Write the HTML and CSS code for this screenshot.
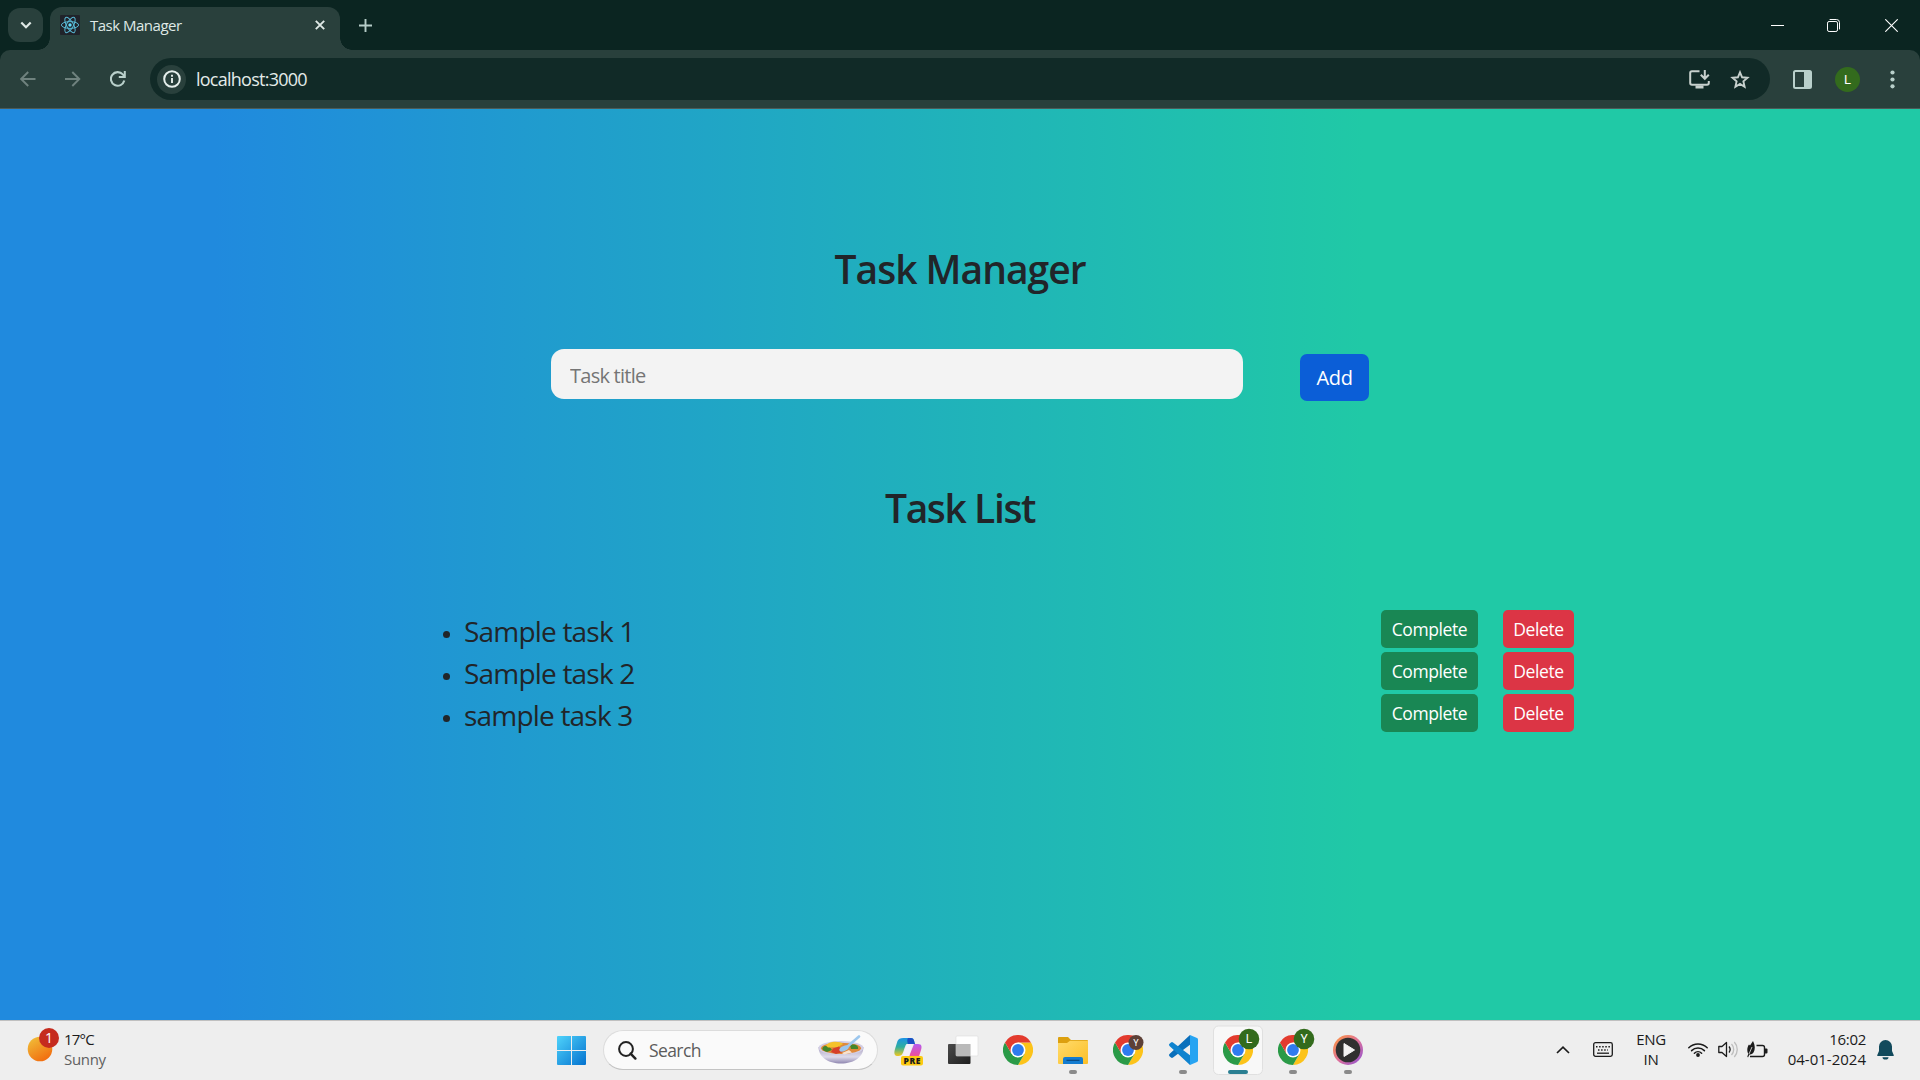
FILE: index.html
```html
<!DOCTYPE html>
<html lang="en">
<head>
<meta charset="utf-8">
<title>Task Manager</title>
<link rel="stylesheet" href="styles.css">
</head>
<body>
<svg class="defs" width="0" height="0">
  <defs>
    <linearGradient id="winBlue" x1="0" y1="0" x2="1" y2="1"><stop offset="0" stop-color="#4fd3fb"/><stop offset="1" stop-color="#0472cf"/></linearGradient>
    <linearGradient id="sun" x1="0.2" y1="0" x2="0.8" y2="1"><stop offset="0" stop-color="#f0bd38"/><stop offset="1" stop-color="#f2670c"/></linearGradient>
    <linearGradient id="bowlBody" x1="0" y1="0" x2="0" y2="1"><stop offset="0" stop-color="#a9a2c2"/><stop offset=".6" stop-color="#dedbea"/><stop offset="1" stop-color="#8f86b0"/></linearGradient>
    <linearGradient id="copA" x1="0" y1="0" x2="0" y2="1"><stop offset="0" stop-color="#1b93e6"/><stop offset=".5" stop-color="#2fae9e"/><stop offset="1" stop-color="#f2c81e"/></linearGradient>
    <linearGradient id="copB" x1="0" y1="0" x2="0" y2="1"><stop offset="0" stop-color="#b65cf0"/><stop offset=".6" stop-color="#ea4fa0"/><stop offset="1" stop-color="#f79a4c"/></linearGradient>
    <linearGradient id="folder" x1="0" y1="0" x2="1" y2="1"><stop offset="0" stop-color="#ffdb6b"/><stop offset="1" stop-color="#fcbf27"/></linearGradient>
    <linearGradient id="mediaRing" x1="0" y1="0" x2="1" y2="1"><stop offset="0" stop-color="#ff9736"/><stop offset=".5" stop-color="#e0729a"/><stop offset="1" stop-color="#8a4fd6"/></linearGradient>
    <linearGradient id="darkSq" x1="0" y1="0" x2="1" y2="1"><stop offset="0" stop-color="#4a4a4a"/><stop offset="1" stop-color="#1e1e1e"/></linearGradient>
    <symbol id="chrome" viewBox="-15 -15 30 30">
      <path d="M0 -7.5H13A15 15 0 0 1 0 15L6.5 3.75Z" fill="#fcc31a"/>
      <path d="M-13 -7.5A15 15 0 0 0 0 15L6.5 3.75 -6.5 3.75Z" fill="#2a9a47"/>
      <path d="M-13 -7.5A15 15 0 0 1 13 -7.5H0L-6.5 3.75Z" fill="#e33b2e"/>
      <circle r="7.5" fill="#fff"/><circle r="5.9" fill="#2f7bee"/>
    </symbol>
  </defs>
</svg>
<div class="screen">
  <header class="browser">
    <div class="tabstrip">
      <button class="tab-menu"><svg width="12" height="8" viewBox="0 0 12 8"><path d="M1.3 1.5 6 6.2 10.7 1.5" fill="none" stroke="#dfe9e6" stroke-width="2.2"/></svg></button>
      <div class="tab">
        <svg class="favicon" width="20" height="20" viewBox="-10 -10 20 20"><rect x="-10" y="-10" width="20" height="20" rx="1" fill="#20232a"/><g fill="none" stroke="#58b8d4" stroke-width="1"><ellipse rx="8.6" ry="3.4"/><ellipse rx="8.6" ry="3.4" transform="rotate(60)"/><ellipse rx="8.6" ry="3.4" transform="rotate(120)"/></g><circle r="1.7" fill="#61dafb"/></svg>
        <span class="tab-title">Task Manager</span>
        <svg class="tab-close" width="10" height="10" viewBox="0 0 10 10"><path d="M.8.8 9.2 9.2M9.2.8.8 9.2" stroke="#dfe9e6" stroke-width="1.9"/></svg>
      </div>
      <svg class="new-tab" width="13" height="13" viewBox="0 0 13 13"><path d="M6.5 0V13M0 6.5H13" stroke="#b5ccc7" stroke-width="1.9"/></svg>
      <div class="window-controls">
        <svg width="13" height="13" viewBox="0 0 13 13"><path d="M0 6.5H13" stroke="#fff"/></svg>
        <svg width="13" height="13" viewBox="0 0 13 13"><g fill="none" stroke="#fff"><rect x=".5" y="2.5" width="10" height="10" rx="1.6"/><path d="M2.6.5H9.5A3 3 0 0 1 12.5 3.5V10.4"/></g></svg>
        <svg width="13" height="13" viewBox="0 0 13 13"><path d="M.3.3 12.7 12.7M12.7.3.3 12.7" stroke="#fff" stroke-width="1.1"/></svg>
      </div>
    </div>
    <div class="toolbar">
      <div class="nav">
        <svg width="16" height="16" viewBox="0 0 16 16"><path d="M15.5 8H1.8M8.2 1 1.2 8l7 7" fill="none" stroke="#6f827e" stroke-width="1.9"/></svg>
        <svg width="16" height="16" viewBox="0 0 16 16"><path d="M0 8H13.7M7.3 1l7 7-7 7" fill="none" stroke="#6f827e" stroke-width="1.9"/></svg>
        <svg width="16" height="16" viewBox="0 0 16 16"><path d="M14.3 9.6A6.8 6.8 0 1 1 12.8 3.4L14.5 5.4" fill="none" stroke="#b9d0cb" stroke-width="2.1"/><path d="M15.8 0V7H8.8V5H13.8V0Z" fill="#b9d0cb"/></svg>
      </div>
      <div class="omnibox">
        <span class="site-info"><svg width="18" height="18" viewBox="0 0 18 18"><circle cx="9" cy="9" r="7.8" fill="none" stroke="#e6efec" stroke-width="2"/><path d="M9 8V13M9 4.8V6.7" stroke="#e6efec" stroke-width="1.9"/></svg></span>
        <span class="url">localhost:3000</span>
        <svg class="install" width="21" height="19" viewBox="0 0 21 19"><path d="M10.5 1.2H3A1.8 1.8 0 0 0 1.2 3V13A1.8 1.8 0 0 0 3 14.8H18A1.8 1.8 0 0 0 19.8 13V11" fill="none" stroke="#c7d0cd" stroke-width="2"/><path d="M6.5 15.5H14.5V18.5H6.5Z" fill="#c7d0cd"/><path d="M15.8 0V8M11.8 4.8 15.8 8.8 19.8 4.8" fill="none" stroke="#c7d0cd" stroke-width="2"/></svg>
        <svg width="20" height="19" viewBox="0 0 20 19"><path d="M10 2.3 12.1 7.3 17.5 7.8 13.4 11.4 14.6 16.7 10 13.9 5.4 16.7 6.6 11.4 2.5 7.8 7.9 7.3Z" fill="none" stroke="#c7d0cd" stroke-width="1.9"/></svg>
      </div>
      <svg class="panel" width="19" height="19" viewBox="0 0 19 19"><rect x="1" y="1" width="17" height="17" rx="1.5" fill="none" stroke="#b9d0cb" stroke-width="2"/><path d="M11 1H18V18H11Z" fill="#b9d0cb"/></svg>
      <span class="avatar">L</span>
      <svg class="kebab" width="5" height="19" viewBox="0 0 5 19"><g fill="#b9d0cb"><circle cx="2.5" cy="2.5" r="2.1"/><circle cx="2.5" cy="9.5" r="2.1"/><circle cx="2.5" cy="16.3" r="2.1"/></g></svg>
    </div>
  </header>

  <main class="page">
    <h1 class="heading">Task Manager</h1>
    <form class="task-form">
      <input class="task-input" type="text" placeholder="Task title">
      <button class="btn btn-add" type="button">Add</button>
    </form>
    <h2 class="heading heading-list">Task List</h2>
    <ul class="tasks">
      <li class="task"><span class="task-name">Sample task 1</span><button class="btn btn-sm complete">Complete</button><button class="btn btn-sm delete">Delete</button></li>
      <li class="task"><span class="task-name">Sample task 2</span><button class="btn btn-sm complete">Complete</button><button class="btn btn-sm delete">Delete</button></li>
      <li class="task"><span class="task-name">sample task 3</span><button class="btn btn-sm complete">Complete</button><button class="btn btn-sm delete">Delete</button></li>
    </ul>
  </main>

  <footer class="taskbar">
    <div class="weather">
      <svg width="34" height="36" viewBox="0 0 34 36"><circle cx="13" cy="22" r="12.3" fill="url(#sun)"/><circle cx="22" cy="11" r="10" fill="#c52b1e"/><text x="22" y="15.6" class="badge-num">1</text></svg>
      <div class="two-line"><span class="temp">17°C</span><span class="muted">Sunny</span></div>
    </div>
    <div class="apps">
      <svg class="start" width="29" height="29" viewBox="0 0 29 29"><path d="M1 0H14V14H0V1A1 1 0 0 1 1 0ZM15 0H28A1 1 0 0 1 29 1V14H15ZM0 15H14V29H1A1 1 0 0 1 0 28ZM15 15H29V28A1 1 0 0 1 28 29H15Z" fill="url(#winBlue)"/></svg>
      <div class="search">
        <svg width="19" height="19" viewBox="0 0 19 19"><circle cx="8" cy="8" r="6.9" fill="none" stroke="#222" stroke-width="2"/><path d="M12.6 12.6 17.4 17.6" stroke="#222" stroke-width="2.4" stroke-linecap="round"/></svg>
        <span class="search-label">Search</span>
        <svg class="bowl" width="46" height="30" viewBox="0 0 46 30">
          <path d="M.5 12C.5 22 10 28.500 23 28.500S45.500 22 45.500 12Z" fill="url(#bowlBody)"/>
          <ellipse cx="23" cy="13" rx="22.500" ry="7" fill="#d3cee4"/>
          <ellipse cx="23" cy="13.300" rx="20" ry="5.600" fill="#e08a3a"/>
          <path d="M4.500 13C6 9.500 12 11 14 15L9 17C5 16 4 14 4.500 13ZM32 10C37 8.500 41 11 40 14L33 14Z" fill="#44862b"/>
          <path d="M8 10.500C10 6 22 5.500 25 9L20 12 10 12.500Z" fill="#f5c22b"/>
          <path d="M15 13.500 21 11.500 25 17 18 19 13 17Z" fill="#d63f2a"/>
          <path d="M24 18 31 15 34 17.500 26 19.500Z" fill="#f8e3cf"/>
          <ellipse cx="26" cy="13.500" rx="5" ry="2.500" transform="rotate(-25 26 13.500)" fill="#9cc7ee"/>
          <path d="M29 12 41 1.500" stroke="#9cc7ee" stroke-width="2.600" stroke-linecap="round"/>
        </svg>
      </div>
      <div class="icons">
        <svg class="app" viewBox="-27 -29 54 59"><path d="M-4.500-12H3C6-12 6-9 7-6H-1C-3-6-4 2-6 4.500-7 6-9 6-11 6-14 6-14 2-13-1L-10.500-9C-9.500-11-8-12-4.500-12Z" fill="url(#copA)"/><path d="M0-12H3C6-12 6-9 7-6H0C-1-8-1-11 0-12Z" fill="#1a4fc4"/><path d="M6-6H10C14-6 14-3 13 0L10.500 8C9.500 11 8 12 5 12H-2C0 11 1 8 2 4Z" fill="url(#copB)"/><path d="M-1-6H4.500L1 6H-5Z" fill="#f4f0fa"/><rect x="-7" y="6" width="22" height="9.500" rx="2" fill="#fdca12"/><text x="4.200" y="13.600" class="pre">PRE</text></svg>
        <svg class="app" viewBox="-27 -29 54 59"><rect x="-15" y="-6" width="22.500" height="20" rx="1" fill="url(#darkSq)"/><rect x="-7" y="-14" width="22" height="20" rx="1" fill="#fff" fill-opacity=".9" stroke="#dcdcdc" stroke-width=".6"/><rect x="-7" y="-6" width="14.500" height="12" fill="#b9b9b9"/></svg>
        <svg class="app" viewBox="-27 -29 54 59"><use href="#chrome" x="-15" y="-15" width="30" height="30"/></svg>
        <svg class="app" viewBox="-27 -29 54 59"><path d="M-15-12A1 1 0 0 1-14-13H-5L-2-10H14A1 1 0 0 1 15-9V0H-15Z" fill="#dca00f"/><path d="M-15-7H-6L-3-9.300H15V13A1 1 0 0 1 14 14H-14A1 1 0 0 1-15 13Z" fill="url(#folder)"/><path d="M-10 14V9A2 2 0 0 1-8 7H8A2 2 0 0 1 10 9V14Z" fill="#147cd0"/><rect x="-6.500" y="9.700" width="13" height="1.300" fill="#0a4c86"/><rect x="-4" y="20" width="8" height="4" rx="2" fill="#8a8a8a"/></svg>
        <svg class="app" viewBox="-27 -29 54 59"><use href="#chrome" x="-15" y="-15" width="30" height="30"/><circle cx="8" cy="-7.500" r="7.500" fill="#5d4037"/><text x="8" y="-4" class="badge-sm">Y</text></svg>
        <svg class="app" viewBox="-27 -29 54 59"><path d="M7-15-13.500 4A1.500 1.500 0 0 0-13.500 6.200L-12 7.600A1.500 1.500 0 0 0-10 7.600L8-6Z" fill="#0a6fbb"/><path d="M7 15-13.500-4A1.500 1.500 0 0 1-13.500-6.200L-12-7.600A1.500 1.500 0 0 1-10-7.600L8 6Z" fill="#0f83cf"/><path d="M7-15 14-12A2 2 0 0 1 15-10.500V10.500A2 2 0 0 1 14 12L7 15Z" fill="#27a4f2"/><rect x="-4" y="20" width="8" height="4" rx="2" fill="#8a8a8a"/></svg>
        <svg class="app" viewBox="-27 -29 54 59"><rect x="-24.500" y="-24" width="49" height="48.500" rx="5" fill="#f8f8f8" stroke="#e0e0e0"/><use href="#chrome" x="-15" y="-15" width="30" height="30"/><circle cx="11" cy="-11" r="10.300" fill="#336b1d"/><text x="11" y="-7" class="badge-lg">L</text><rect x="-10" y="20" width="20" height="4" rx="2" fill="#2b7f92"/></svg>
        <svg class="app" viewBox="-27 -29 54 59"><use href="#chrome" x="-15" y="-15" width="30" height="30"/><circle cx="11" cy="-11" r="10.300" fill="#336b1d"/><text x="11" y="-7" class="badge-lg">Y</text><rect x="-4" y="20" width="8" height="4" rx="2" fill="#8a8a8a"/></svg>
        <svg class="app" viewBox="-27 -29 54 59"><circle r="15" fill="url(#mediaRing)"/><circle r="12.300" fill="#303030"/><path d="M-4-6.500V6.500L6.500 0Z" fill="#f4f4f4" stroke="#f4f4f4" stroke-linejoin="round"/><rect x="-4" y="20" width="8" height="4" rx="2" fill="#8a8a8a"/></svg>
      </div>
    </div>
    <div class="tray">
      <svg width="14" height="8" viewBox="0 0 14 8"><path d="M1 7 7 1.200 13 7" fill="none" stroke="#1b1b1b" stroke-width="1.700"/></svg>
      <svg class="keyboard" width="20" height="15" viewBox="0 0 20 15"><rect x=".7" y=".7" width="18.600" height="13.600" rx="1.800" fill="none" stroke="#1b1b1b" stroke-width="1.300"/><path d="M3 4.700H17M5 7.900H15" stroke="#1b1b1b" stroke-width="1.500" stroke-dasharray="1.500 1.600"/><path d="M4 11.200H16" stroke="#1b1b1b" stroke-width="1.300"/></svg>
      <div class="two-line lang"><span>ENG</span><span>IN</span></div>
      <svg class="wifi" width="20" height="15" viewBox="0 0 20 15"><g fill="none" stroke="#1b1b1b" stroke-width="1.500" stroke-linecap="round"><path d="M.8 5.800A13 13 0 0 1 19.200 5.800M3.600 8.600A9 9 0 0 1 16.400 8.600M6.400 11.200A5.200 5.200 0 0 1 13.600 11.200"/></g><circle cx="10" cy="13" r="1.900" fill="#1b1b1b"/></svg>
      <svg class="volume" width="21" height="17" viewBox="0 0 21 17"><path d="M.8 5.500H4L8.500 1.500V15.500L4 11.500H.8Z" fill="none" stroke="#1b1b1b" stroke-width="1.300" stroke-linejoin="round"/><path d="M11 5.500A5 5 0 0 1 11 11.500" fill="none" stroke="#1b1b1b" stroke-width="1.300"/><path d="M13.500 3A8 8 0 0 1 13.500 14M16.300 1A11 11 0 0 1 16.300 16" fill="none" stroke="#bdbdbd" stroke-width="1.300"/></svg>
      <svg class="battery" width="21" height="18" viewBox="0 0 21 18"><path d="M9.500 4.500H15.500A2 2 0 0 1 17.500 6.500V13.500A2 2 0 0 1 15.500 15.500H3" fill="none" stroke="#1b1b1b" stroke-width="1.400"/><path d="M18 7.500H19.500A1 1 0 0 1 20.500 8.500V11.500A1 1 0 0 1 19.500 12.500H18Z" fill="#1b1b1b"/><path d="M6 0C8 4 8.500 8 6.500 11.500 5 13.500 3 13.500 2.500 13.500L1 16.500.3 15.500 1.300 13C-.5 10 .3 5.500 2 3.500L3 4.500C4 3 5 1.500 6 0Z" fill="#1b1b1b"/><path d="M2 13 5 6" stroke="#eee" stroke-width=".8"/></svg>
      <div class="two-line clock"><span class="time">16:02</span><span>04-01-2024</span></div>
      <svg class="bell" width="17" height="20" viewBox="0 0 17 20"><path d="M8.500 0A6.500 6.500 0 0 1 15 6.500V11L16.700 15V16H.3V15L2 11V6.500A6.500 6.500 0 0 1 8.500 0Z" fill="#124a5c"/><path d="M5.500 17.200H11.500A3 2.300 0 0 1 5.500 17.200Z" fill="#124a5c"/></svg>
    </div>
  </footer>
</div>
</body>
</html>
```
FILE: styles.css
```css
* { box-sizing: border-box; }
body { margin: 0; font-family: "Open Sans", "Noto Sans", sans-serif; color: #212529; }
button { font: inherit; border: 0; padding: 0; }
svg { display: block; flex: none; }
.defs { position: absolute; }
.screen { width: 1920px; height: 1080px; overflow: hidden; display: flex; flex-direction: column; }

/* Browser chrome */
.browser { height: 109px; background: #0b2521; border-bottom: 1px solid #4b5b58; }
.tabstrip { height: 50px; display: flex; align-items: center; padding: 0 22px 0 8px; }
.tab-menu { width: 35px; height: 34px; border-radius: 12px; background: #29403c; display: grid; place-items: center; }
.tab { position: relative; align-self: flex-end; width: 290px; height: 43px; margin-left: 7px; padding: 0 15px 7px 10px; background: #29403c; border-radius: 12px 12px 0 0; display: flex; align-items: center; }
.tab::before, .tab::after { content: ""; position: absolute; bottom: 0; width: 12px; height: 12px; }
.tab::before { left: -12px; background: radial-gradient(circle at 0 0, transparent 11.5px, #29403c 12px); }
.tab::after { right: -12px; background: radial-gradient(circle at 100% 0, transparent 11.5px, #29403c 12px); }
.tab-title { margin-left: 10px; font-size: 15px; letter-spacing: -.5px; color: #dfe9e6; }
.tab-close { margin-left: auto; }
.new-tab { margin-left: 19px; }
.window-controls { margin-left: auto; display: flex; gap: 44px; }
.window-controls svg:nth-child(2) { margin: 0 1px 0 -1px; }
.toolbar { height: 58px; background: #29403c; border-radius: 10px 10px 0 0; display: flex; align-items: center; padding: 0 25px 0 20px; }
.nav { display: flex; gap: 29px; width: 130px; }
.omnibox { width: 1620px; height: 42px; border-radius: 21px; background: #112a27; display: flex; align-items: center; padding: 0 20px 0 7px; }
.site-info { width: 29px; height: 29px; border-radius: 50%; background: #29403c; display: grid; place-items: center; }
.url { margin-left: 10px; font-size: 18px; letter-spacing: -.75px; color: #e3ebe9; }
.install { margin-left: auto; margin-right: 20px; }
.panel { margin-left: 23px; }
.avatar { width: 25px; height: 25px; margin-left: 23px; border-radius: 50%; background: #336b1d; color: #fff; font: 13px/25px Roboto, sans-serif; text-align: center; }
.kebab { margin-left: auto; }

/* Application page */
.page { height: 911px; background: linear-gradient(90deg, #208ade 11.2%, #20c9a6 71%); padding-top: 136px; }
.heading { margin: 0; text-align: center; font-size: 39px; line-height: 48px; font-weight: 600; letter-spacing: -1px; }
.task-form { display: flex; margin: 56px 0 0 551px; }
.task-input { width: 692px; height: 50px; border: 0; border-radius: 13px; background: #f3f3f3; padding: 2px 18px 0 19px; font: 20px "Open Sans", sans-serif; letter-spacing: -.75px; }
.task-input::placeholder { color: #757575; }
.btn { color: #fff; }
.btn-add { width: 69px; height: 47px; margin: 5px 0 0 57px; border-radius: 7px; background: #0b5ed7; font-size: 20px; letter-spacing: -.3px; }
.heading-list { margin-top: 83px; letter-spacing: -1.4px; }
.tasks { list-style: none; margin: 76px 0 0 443px; padding: 0; }
.task { height: 42px; display: flex; align-items: center; }
.task::before { content: ""; width: 7px; height: 7px; margin: 10px 14px 0 0; border-radius: 50%; background: #212529; }
.task-name { width: 917px; padding-top: 4px; font-size: 28px; line-height: 38px; letter-spacing: -.8px; }
.btn-sm { height: 38px; border-radius: 5px; font-size: 17.500px; letter-spacing: -.4px; }
.complete { width: 97px; background: #198754; }
.delete { width: 71px; margin-left: 25px; background: #dc3545; }

/* Taskbar */
.taskbar { height: 60px; background: #eee; border-top: 1px solid #c0c0c0; display: flex; color: #1b1b1b; }
.two-line { display: flex; flex-direction: column; font-size: 15px; line-height: 20px; }
.muted { color: #606060; letter-spacing: -.3px; }
.temp { letter-spacing: -.8px; }
.weather { display: flex; width: 557px; padding: 6px 0 0 27px; }
.weather .two-line { margin-left: 3px; padding-top: 2px; }
.badge-num { font: 14px "Open Sans", sans-serif; fill: #fff; text-anchor: middle; }
.apps { display: flex; align-items: center; width: 820px; }
.search { width: 275px; height: 40px; margin: 0 0 1px 17px; border: 1px solid #dcdcdc; border-bottom-color: #c4c4c4; border-radius: 20px; background: #fafafa; display: flex; align-items: center; padding: 0 13px 0 14px; }
.search-label { margin-left: 12px; font-size: 17.500px; letter-spacing: -.6px; color: #5c5c5c; }
.bowl { margin-left: auto; }
.icons { display: flex; gap: 1px; margin-left: 3px; }
.app { width: 54px; height: 59px; }
.pre { font: 800 8.500px "Open Sans", sans-serif; fill: #1b1b1b; text-anchor: middle; letter-spacing: .5px; }
.badge-sm { font: 9px Roboto, sans-serif; fill: #fff; text-anchor: middle; }
.badge-lg { font: 12px Roboto, sans-serif; fill: #fff; text-anchor: middle; }
.tray { display: flex; align-items: center; margin-left: auto; padding: 0 26px 2px 0; }
.tray .two-line { margin-bottom: 1px; }
.keyboard { margin-left: 23px; }
.lang { width: 36px; margin-left: 20px; text-align: center; letter-spacing: -.3px; }
.wifi { margin-left: 19px; }
.volume { margin-left: 10px; }
.battery { margin-left: 8px; }
.clock { width: 90px; margin-left: 8px; text-align: right; }
.time { letter-spacing: -.3px; }
.bell { margin-left: 11px; }
```
